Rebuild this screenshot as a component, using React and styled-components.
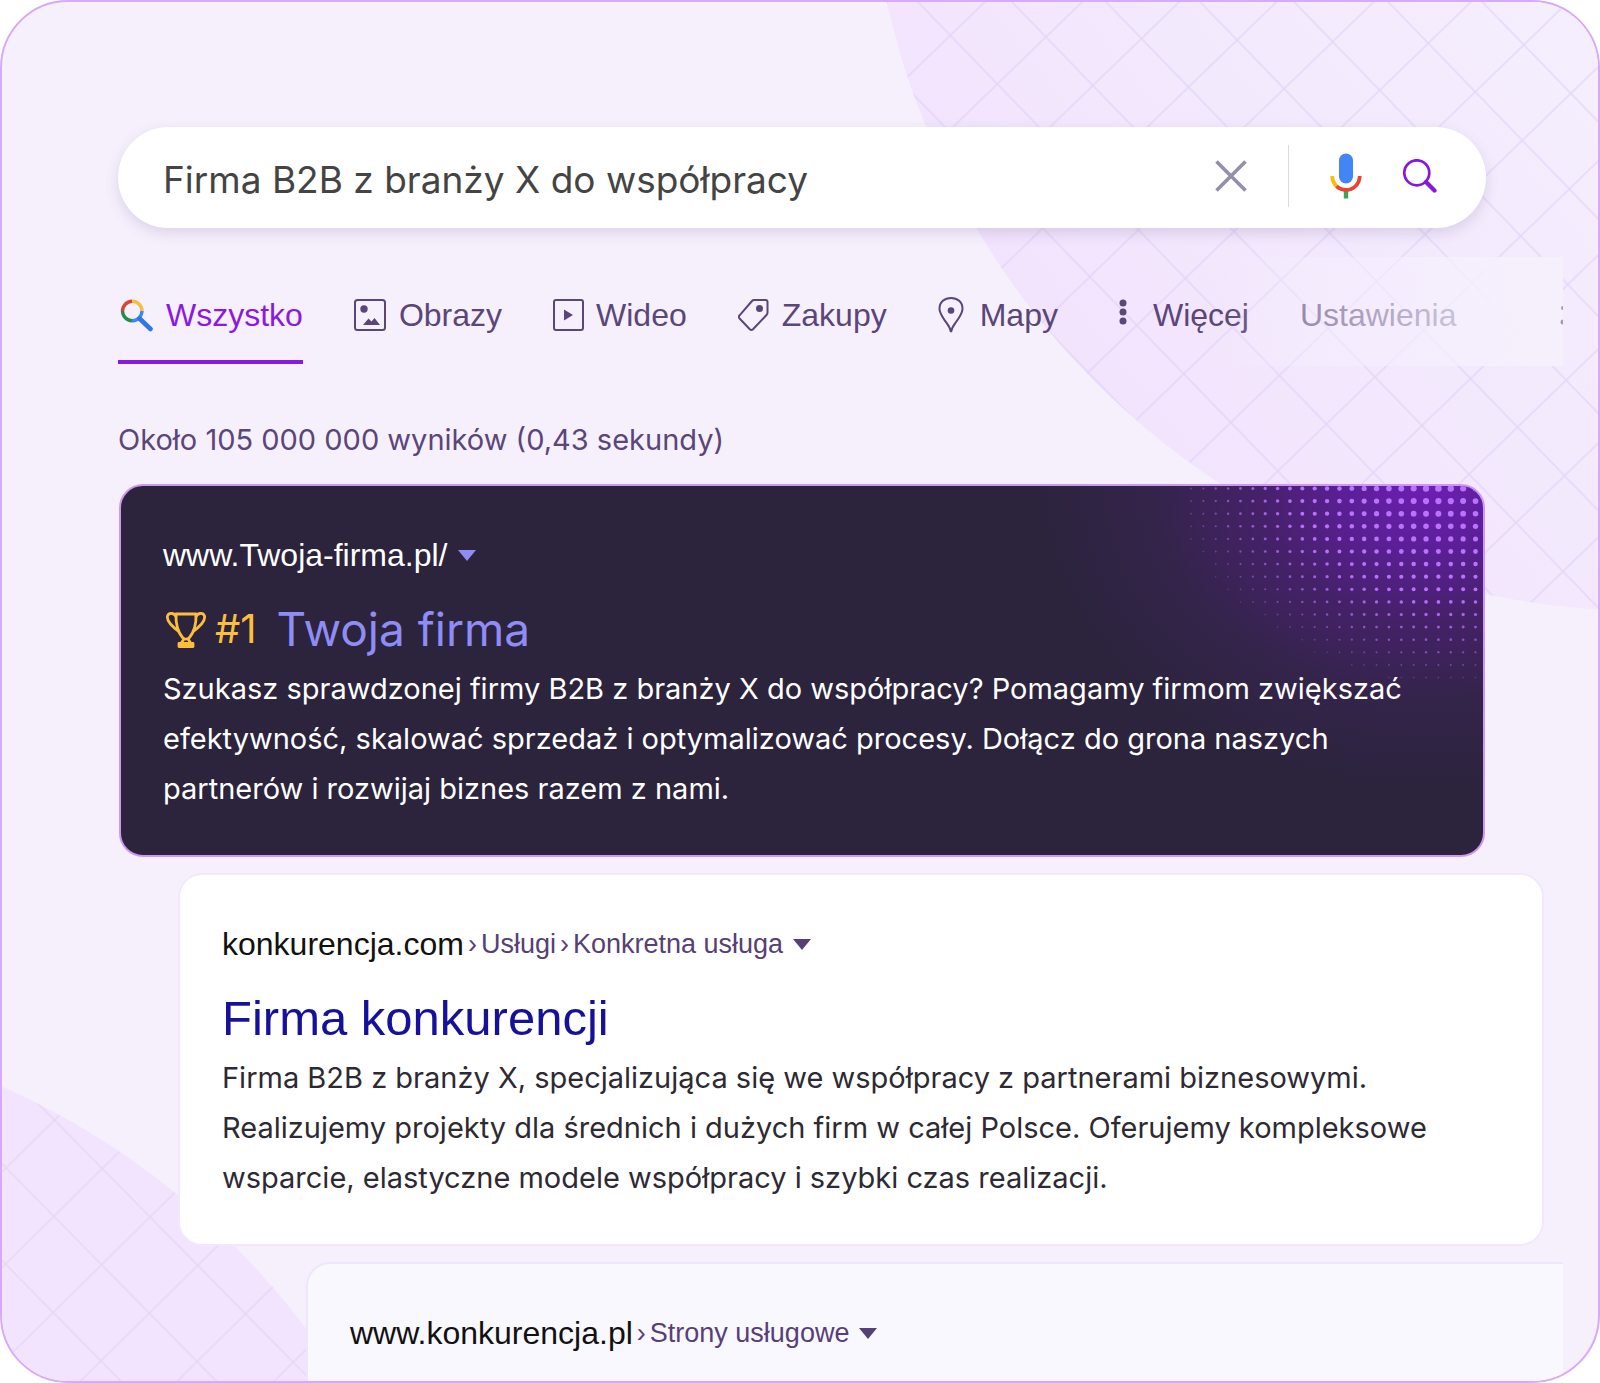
import React, { useState } from 'react';
import styled, { createGlobalStyle } from 'styled-components';

const DOT_COLS = 24;
const DOT_ROWS = 16;

// halftone dots, biggest near the top right corner and shrinking outwards
const dots = [];
for (let row = 0; row < DOT_ROWS; row++) {
  for (let col = 0; col < DOT_COLS; col++) {
    const dx = Math.abs(col - 20) / 22;
    const dy = row / 16;
    const force = 1 - Math.pow(Math.pow(dx, 1.7) + Math.pow(dy, 1.7), 1 / 1.7);
    if (force > 0.02) {
      dots.push({
        key: `${row}-${col}`,
        cx: 8 + col * 12.37,
        cy: 2.5 + row * 12.6,
        r: 0.7 + force * 2.6,
        opacity: Math.min(1, 0.25 + force * 1.6),
      });
    }
  }
}

const Halftone = () => (
  <HalftoneSvg width="300" height="200" viewBox="0 0 300 200" aria-hidden="true">
    {dots.map((dot) => (
      <circle key={dot.key} cx={dot.cx} cy={dot.cy} r={dot.r} opacity={dot.opacity} fill="#bb72fb" />
    ))}
  </HalftoneSvg>
);

const Backdrop = () => (
  <>
    <TopShape width="720" height="620" viewBox="880 0 720 620" aria-hidden="true">
      <defs>
        <pattern
          id="gridTop"
          width="67.6"
          height="67.6"
          patternUnits="userSpaceOnUse"
          patternTransform="translate(1520.7 236) rotate(45.94) translate(-33.8 -33.8)"
        >
          <path d="M33.8 0V67.6M0 33.8H67.6" stroke="#dccdf7" strokeWidth="1.5" fill="none" />
        </pattern>
        <linearGradient id="fillTop" x1="1000" y1="480" x2="1600" y2="0" gradientUnits="userSpaceOnUse">
          <stop offset="0" stopColor="#f1e1fd" />
          <stop offset="0.55" stopColor="#f3e9fd" />
          <stop offset="1" stopColor="#f5effe" />
        </linearGradient>
      </defs>
      <circle cx="1647" cy="-168" r="779" fill="url(#fillTop)" />
      <circle cx="1647" cy="-168" r="779" fill="url(#gridTop)" opacity="0.65" />
    </TopShape>
    <BottomShape width="340" height="310" viewBox="0 1073 340 310" aria-hidden="true">
      <defs>
        <pattern
          id="gridBottom"
          width="68"
          height="68"
          patternUnits="userSpaceOnUse"
          patternTransform="translate(150 1217) rotate(45.4) translate(-34 -34)"
        >
          <path d="M34 0V68M0 34H68" stroke="#dfcff5" strokeWidth="1.5" fill="none" />
        </pattern>
      </defs>
      <circle cx="-315" cy="1797" r="778" fill="#f2e4fe" />
      <circle cx="-315" cy="1797" r="778" fill="url(#gridBottom)" opacity="0.65" />
    </BottomShape>
  </>
);

const CloseIcon = () => (
  <svg width="32" height="32" viewBox="0 0 32 32" fill="none" stroke="#948fab" strokeWidth="3.6">
    <path d="M1.5 1.5L30.5 30.5M30.5 1.5L1.5 30.5" />
  </svg>
);

const MicIcon = () => (
  <svg width="32" height="46" viewBox="0 0 32 46" fill="none">
    <rect x="9" y="0.5" width="14" height="30" rx="7" fill="#4285f4" />
    <path d="M13.8 37H18.2V45.5H13.8Z" fill="#34a853" />
    <path d="M2.3 23C2.3 27.5 4 31 7 33.6" stroke="#fbbc05" strokeWidth="3.8" />
    <path d="M6.6 33.2C9 35.6 12.4 37 16 37C23.500 37 29.7 31 29.7 23" stroke="#ea4335" strokeWidth="3.8" />
  </svg>
);

const SearchIcon = () => (
  <svg width="34" height="34" viewBox="0 0 34 34" fill="none" stroke="#8716e0">
    <circle cx="13.8" cy="13.8" r="12.5" strokeWidth="2.7" />
    <path d="M23 23L31.500 31.500" strokeWidth="4.2" strokeLinecap="round" />
  </svg>
);

const ColorSearchIcon = () => (
  <svg width="36" height="34" viewBox="-2 -1 36 34" fill="none" strokeWidth="3.4">
    <path d="M2.5 12A10 10 0 0 1 12 2.2" stroke="#d94436" />
    <path d="M12 2.2A10 10 0 0 1 22 12" stroke="#f6bf3a" />
    <path d="M2.5 12A10 10 0 0 0 12 21.8" stroke="#1e8e4a" />
    <path d="M22 12A10 10 0 0 1 12 21.8" stroke="#4285f4" />
    <path d="M19.5 19.5L30.500 30" stroke="#2f78e0" strokeWidth="4.6" strokeLinecap="round" />
  </svg>
);

const ImagesIcon = () => (
  <svg width="33" height="34" viewBox="1 0 33 34" fill="none">
    <rect x="2" y="2" width="30" height="30" rx="2.5" stroke="#5a4678" strokeWidth="2" />
    <circle cx="11" cy="11" r="3.7" fill="#5a4678" />
    <path d="M10 27L15.5 20.5L18.5 23.5L21.5 20L27 27Z" fill="#5a4678" />
  </svg>
);

const VideoIcon = () => (
  <svg width="31" height="34" viewBox="0 0 31 34" fill="none">
    <rect x="1" y="2" width="29" height="30" rx="2" stroke="#5a4678" strokeWidth="2" />
    <path d="M11 11.5L20 17L11 22.5Z" fill="#5a4678" />
  </svg>
);

const TagIcon = () => (
  <svg width="32" height="34" viewBox="3 0 32 34" fill="none">
    <path
      d="M19 2H30.5C31.6 2 32.5 2.9 32.5 4V14.5C32.5 15.6 32.2 16.3 31.5 17L18 31.2C17 32.2 15.8 32.2 14.8 31.2L4.600 20.5C3.600 19.5 3.600 18.3 4.600 17.3L17 3C17.6 2.3 18.2 2 19 2Z"
      stroke="#5a4678"
      strokeWidth="2"
    />
    <circle cx="24.5" cy="10.5" r="3.5" fill="#5a4678" />
  </svg>
);

const PinIcon = () => (
  <svg width="30" height="38" viewBox="1 0 30 38" fill="none">
    <path
      d="M14 36C13 30 9.5 27.5 6.5 22.5C4 18.5 2.5 16 2.5 12.7C2.5 6 7.6 2 14 2C20.4 2 25.5 6 25.5 12.7C25.5 16 24 18.5 21.5 22.5C18.5 27.5 15 30 14 36Z"
      stroke="#5a4678"
      strokeWidth="2"
    />
    <circle cx="14" cy="14.5" r="3.3" fill="#5a4678" />
  </svg>
);

const DotsIcon = () => (
  <svg width="32" height="34" viewBox="0 0 32 34" fill="#5a4678">
    <circle cx="14" cy="5" r="3.5" />
    <circle cx="14" cy="14" r="3.5" />
    <circle cx="14" cy="23" r="3.5" />
  </svg>
);

const TrophyIcon = () => (
  <svg width="44" height="38" viewBox="-2 -1 44 38" fill="none" stroke="#fbbf3c" strokeWidth="2.8" strokeLinejoin="round">
    <path d="M11 3H31C31.4 13 29 21 24.5 26.5C22.5 28.5 19.5 28.5 17.5 26.5C13 21 10.6 13 11 3Z" />
    <path d="M11 6C10 2 4 1 2.5 5C1.5 9 5 14 14.5 21M31 6C32 2 38 1 39.5 5C40.5 9 37 14 27.5 21" />
    <path d="M19 28L16 32.5H26L23 28M14 32.5H28V35.500H14Z" />
  </svg>
);

const Caret = () => (
  <svg width="18" height="11" viewBox="0 0 18 11" fill="currentColor">
    <path d="M0 0H18L9 11Z" />
  </svg>
);

const tabs = [
  { label: 'Wszystko', icon: <ColorSearchIcon />, active: true },
  { label: 'Obrazy', icon: <ImagesIcon /> },
  { label: 'Wideo', icon: <VideoIcon /> },
  { label: 'Zakupy', icon: <TagIcon /> },
  { label: 'Mapy', icon: <PinIcon /> },
  { label: 'Więcej', icon: <DotsIcon /> },
  { label: 'Ustawienia' },
];

const App = () => {
  const [query, setQuery] = useState('Firma B2B z branży X do współpracy');

  return (
    <Frame>
      <GlobalStyle />
      <Backdrop />

      <Content>
        <SearchBar role="search" onSubmit={(e) => e.preventDefault()}>
          <SearchInput
            type="text"
            aria-label="Szukaj"
            value={query}
            onChange={(e) => setQuery(e.target.value)}
          />
          <IconButton type="button" aria-label="Wyczyść" onClick={() => setQuery('')}>
            <CloseIcon />
          </IconButton>
          <Divider />
          <IconButton type="button" aria-label="Wyszukiwanie głosowe">
            <MicIcon />
          </IconButton>
          <IconButton type="submit" aria-label="Szukaj">
            <SearchIcon />
          </IconButton>
        </SearchBar>

        <Tabs>
          {tabs.map((tab) => (
            <Tab key={tab.label} href="#" $active={tab.active}>
              {tab.icon}
              {tab.label}
            </Tab>
          ))}
          <TabsEnd width="3" height="20" viewBox="0 0 3 20" fill="#a39bb5" aria-hidden="true">
            <circle cx="3" cy="3" r="2" />
            <circle cx="3" cy="17" r="2.5" />
          </TabsEnd>
        </Tabs>

        <Stats>Około 105 000 000 wyników (0,43 sekundy)</Stats>

        <Results>
          <TopResult>
            <Halftone />
            <UrlRow $color="#8f8cf5">
              <Url href="#" $color="#fff">www.Twoja-firma.pl/</Url>
              <MenuButton type="button" aria-label="Więcej opcji">
                <Caret />
              </MenuButton>
            </UrlRow>
            <TopTitle>
              <Rank>
                <TrophyIcon />
                #1
              </Rank>
              <a href="#">Twoja firma</a>
            </TopTitle>
            <Description>
              Szukasz sprawdzonej firmy B2B z branży X do współpracy? Pomagamy firmom zwiększać
              <br />
              efektywność, skalować sprzedaż i optymalizować procesy. Dołącz do grona naszych
              <br />
              partnerów i rozwijaj biznes razem z nami.
            </Description>
          </TopResult>

          <Result>
            <UrlRow>
              <Url href="#">konkurencja.com</Url>
              <Crumb>›</Crumb>
              <Crumb>Usługi</Crumb>
              <Crumb>›</Crumb>
              <Crumb>Konkretna usługa</Crumb>
              <MenuButton type="button" aria-label="Więcej opcji">
                <Caret />
              </MenuButton>
            </UrlRow>
            <Title>
              <a href="#">Firma konkurencji</a>
            </Title>
            <Description>
              Firma B2B z branży X, specjalizująca się we współpracy z partnerami biznesowymi.
              <br />
              Realizujemy projekty dla średnich i dużych firm w całej Polsce. Oferujemy kompleksowe
              <br />
              wsparcie, elastyczne modele współpracy i szybki czas realizacji.
            </Description>
          </Result>

          <LastResult>
            <UrlRow>
              <Url href="#">www.konkurencja.pl</Url>
              <Crumb>›</Crumb>
              <Crumb>Strony usługowe</Crumb>
              <MenuButton type="button" aria-label="Więcej opcji">
                <Caret />
              </MenuButton>
            </UrlRow>
          </LastResult>
        </Results>
      </Content>
    </Frame>
  );
};

export default App;

//----- Styled Components------
const GlobalStyle = createGlobalStyle`
  * {
    box-sizing: border-box;
  }

  body {
    margin: 0;
    background: #fff;
    font-family: Inter, 'Liberation Sans', sans-serif;
  }

  a {
    color: inherit;
    text-decoration: none;
  }

  svg {
    flex-shrink: 0;
    display: block;
  }
`;

const Frame = styled.div`
  position: relative;
  display: flex;
  min-height: 100vh;
  overflow: hidden;
  background: #f6f0fd;
  border: 2px solid #d8a8fa;
  border-radius: 68px;
`;

const TopShape = styled.svg`
  position: absolute;
  top: -2px;
  right: -2px;
`;

const BottomShape = styled.svg`
  position: absolute;
  bottom: -2px;
  left: -2px;
`;

const Content = styled.main`
  position: relative;
  flex: 1;
  min-width: 0;
  display: flex;
  flex-direction: column;
  padding: 125px 35px 0 116px;
`;

const SearchBar = styled.form`
  display: flex;
  align-items: center;
  gap: 41px;
  height: 101px;
  margin-right: 77px;
  padding: 0 49px 4px 45px;
  background: #fff;
  border-radius: 51px;
  box-shadow: 0 5px 14px rgba(80, 60, 120, 0.16);
`;

const SearchInput = styled.input`
  flex: 1;
  min-width: 0;
  padding: 8px 0 0;
  border: none;
  outline: none;
  background: none;
  color: #444;
  font-family: inherit;
  font-size: 37px;
  line-height: 48px;
`;

const IconButton = styled.button`
  display: flex;
  padding: 0;
  border: none;
  background: none;
  cursor: pointer;
`;

const Divider = styled.span`
  width: 1px;
  height: 62px;
  background: #dcdae0;
`;

const Tabs = styled.nav`
  position: relative;
  display: flex;
  align-items: flex-start;
  gap: 51px;
  height: 109px;
  margin-top: 29px;
  padding-top: 40px;
  overflow: hidden;

  &::after {
    content: '';
    position: absolute;
    top: 0;
    right: 0;
    bottom: 0;
    width: 340px;
    background: linear-gradient(
      90deg,
      rgba(246, 240, 253, 0),
      rgba(246, 240, 253, 0.42) 25%,
      rgba(246, 240, 253, 0.72) 68%,
      #f6f0fd 90%
    );
    pointer-events: none;
  }
`;

const Tab = styled.a`
  flex-shrink: 0;
  display: flex;
  align-items: center;
  gap: 12px;
  height: 67px;
  padding-bottom: 27px;
  border-bottom: 4px solid ${({ $active }) => ($active ? '#8a1ade' : 'transparent')};
  color: ${({ $active }) => ($active ? '#8a1ade' : '#5a4678')};
  font-family: 'Liberation Sans', Arial, sans-serif;
  font-size: 32px;
  line-height: 36px;
`;

const TabsEnd = styled.svg`
  position: relative;
  z-index: 1;
  margin: 8px 0 0 auto;
`;

const Stats = styled.p`
  margin: 54px 0 24px;
  color: #5a4678;
  font-size: 29px;
  line-height: 40px;
`;

const Results = styled.div`
  flex: 1;
  display: flex;
  flex-direction: column;
  gap: 16px;
`;

const Card = styled.article`
  padding: 49px 42px 41px;
  border-radius: 24px;
`;

const TopResult = styled(Card)`
  position: relative;
  margin-right: 78px;
  margin-left: 1px;
  overflow: hidden;
  color: #fff;
  background: radial-gradient(
    ellipse 400px 310px at 96% 0%,
    #6c1fb3 0%,
    #5c1f98 20%,
    #46216a 42%,
    #34244b 68%,
    #2b243c 100%
  );
  border: 2px solid #cd98f3;
`;

const Result = styled(Card)`
  margin: 0 19px 0 60px;
  color: #2d2a33;
  background: #fff;
  border: 2px solid #f2e8fd;
`;

const LastResult = styled(Card)`
  flex: 1;
  margin-left: 188px;
  padding-bottom: 24px;
  color: #2d2a33;
  background: #faf8ff;
  border: 2px solid #f0e6fc;
  border-width: 2px 0 0 2px;
  border-radius: 24px 0 0 0;
`;

const HalftoneSvg = styled.svg`
  position: absolute;
  top: 0;
  right: 0;
`;

const UrlRow = styled.div`
  display: flex;
  align-items: center;
  gap: 4px;
  color: ${({ $color }) => $color || '#573f77'};
  font-family: 'Liberation Sans', Arial, sans-serif;
`;

const Url = styled.a`
  color: ${({ $color }) => $color || '#111'};
  font-size: 32px;
  line-height: 40px;
`;

const Crumb = styled.span`
  font-size: 27px;
  line-height: 40px;
`;

const MenuButton = styled.button`
  padding: 0 6px;
  border: none;
  background: none;
  color: inherit;
  cursor: pointer;
`;

const Title = styled.h2`
  margin: 26px 0 7px;
  color: #15119b;
  font-family: 'Liberation Sans', Arial, sans-serif;
  font-size: 49px;
  font-weight: 400;
  line-height: 56px;
`;

const TopTitle = styled(Title)`
  display: flex;
  align-items: center;
  gap: 20px;
  color: #8f8cf5;
  font-family: inherit;
  font-size: 46px;
`;

const Rank = styled.span`
  display: flex;
  align-items: center;
  gap: 8px;
  color: #fbbf3c;
  font-size: 40px;
`;

const Description = styled.p`
  position: relative;
  margin: 0;
  font-size: 29px;
  line-height: 50px;
`;
